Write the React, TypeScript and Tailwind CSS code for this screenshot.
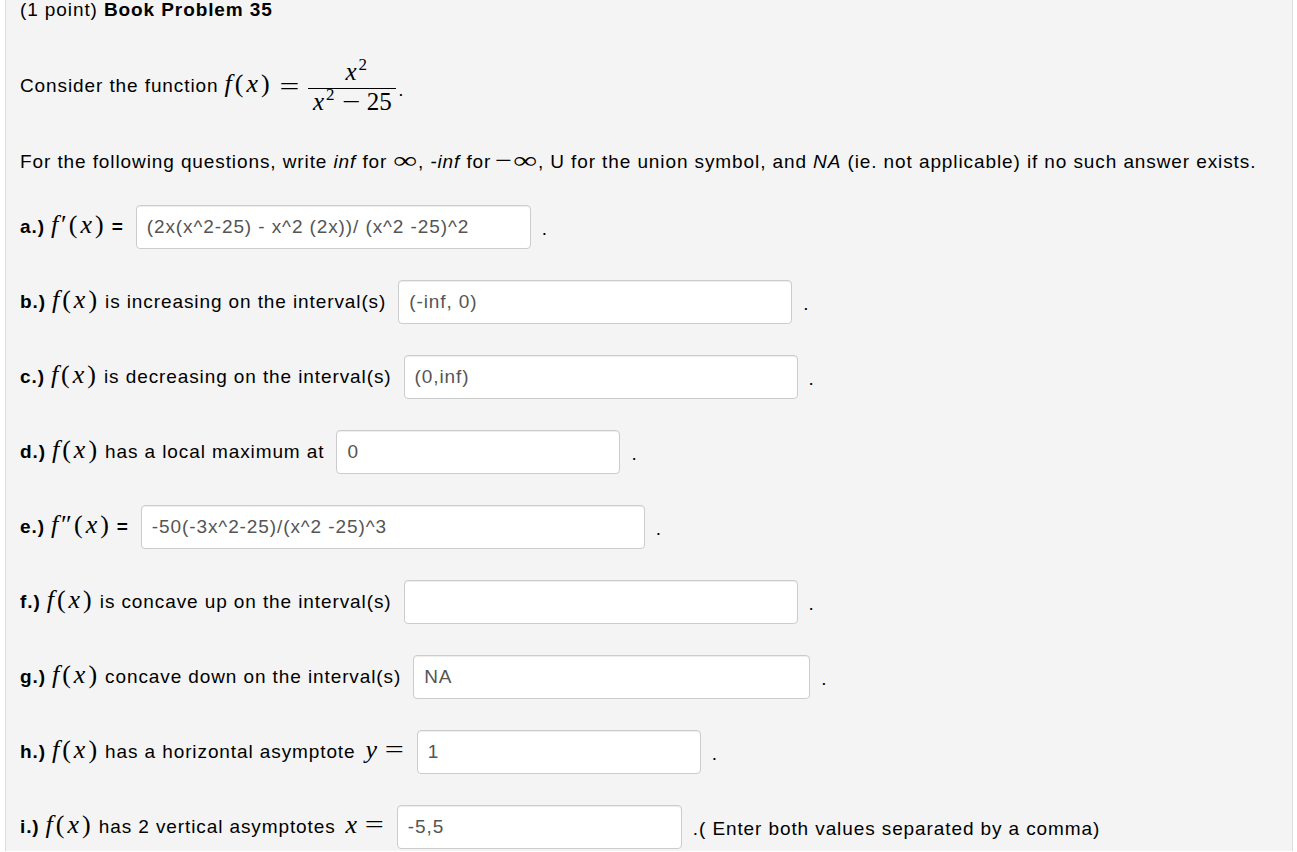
import React from 'react';

const serif = "font-['Liberation_Serif','Times_New_Roman',serif] tracking-normal";

const Fx = ({ prime = '' }: { prime?: string }) => (
  <span className={`${serif} text-[26px] leading-none whitespace-nowrap`}>
    <i className="mr-[3px] italic">f</i>
    {prime && <span className="mr-[2px]">{prime}</span>}
    <span>(</span>
    <i className="mx-[3px] italic">x</i>
    <span>)</span>
  </span>
);

const MathVar = ({ v }: { v: string }) => (
  <span className={`${serif} text-[26px] leading-none whitespace-nowrap mr-[3px]`}>
    <i className="ml-[2px] italic">{v}</i>
    <span className="ml-[10px] inline-block scale-x-[1.3]">=</span>
  </span>
);

const Inf = ({ minus = false }: { minus?: boolean }) => (
  <span className={`${serif} text-[23px] leading-none`}>
    {minus && <span className="mr-[3px] inline-block scale-x-[1.3]">−</span>}
    <span className="mx-[4px] inline-block scale-x-[1.45]">∞</span>
  </span>
);

const Sq = () => <span className="relative -top-[10px] ml-[2px] text-[17px]">2</span>;

const Box = ({ value, w }: { value: string; w: string }) => (
  <input
    readOnly
    value={value}
    className={`${w} h-[44px] rounded-[4px] border border-[#cccccc] bg-white px-[10px] text-[19px] tracking-[0.9px] text-[#555555] shadow-[inset_0_1px_1px_rgba(0,0,0,0.075)] outline-none font-['Liberation_Sans',Arial,sans-serif]`}
  />
);

interface Row {
  tag: string;
  label: React.ReactNode;
  value: string;
  w: string;
  after?: string;
}

const rows: Row[] = [
  { tag: 'a.)', label: <><Fx prime="′" /><b>=</b></>, value: '(2x(x^2-25) - x^2 (2x))/ (x^2 -25)^2', w: 'w-[395px]' },
  { tag: 'b.)', label: <><Fx /><span>is increasing on the interval(s)</span></>, value: '(-inf, 0)', w: 'w-[394px]' },
  { tag: 'c.)', label: <><Fx /><span>is decreasing on the interval(s)</span></>, value: '(0,inf)', w: 'w-[394px]' },
  { tag: 'd.)', label: <><Fx /><span>has a local maximum at</span></>, value: '0', w: 'w-[284px]' },
  { tag: 'e.)', label: <><Fx prime="″" /><b>=</b></>, value: '-50(-3x^2-25)/(x^2 -25)^3', w: 'w-[504px]' },
  { tag: 'f.)', label: <><Fx /><span>is concave up on the interval(s)</span></>, value: '', w: 'w-[394px]' },
  { tag: 'g.)', label: <><Fx /><span>concave down on the interval(s)</span></>, value: 'NA', w: 'w-[397px]' },
  { tag: 'h.)', label: <><Fx /><span>has a horizontal asymptote</span><MathVar v="y" /></>, value: '1', w: 'w-[284px]' },
  { tag: 'i.)', label: <><Fx /><span>has 2 vertical asymptotes</span><MathVar v="x" /></>, value: '-5,5', w: 'w-[285px]', after: '.( Enter both values separated by a comma)' },
];

export default function App() {
  return (
    <div className="min-h-[852px] bg-white font-['Liberation_Sans',Arial,sans-serif] text-[19px] tracking-[0.9px] text-black">
      <div className="ml-[5px] w-[1288px] min-h-[852px] border-x border-[#dddddd] bg-[#f4f4f4] px-[14px]">
        <div className="h-[22px] leading-[22px] -mt-[1px]">
          (1 point) <b>Book Problem 35</b>
        </div>

        <div className="mt-[37px] flex h-[56px] items-center">
          <span>Consider the function</span>
          <span className="ml-[6px]"><Fx /></span>
          <span className={`${serif} ml-[12px] inline-block scale-x-[1.35] text-[26px]`}>=</span>
          <span className={`${serif} ml-[12px] inline-flex flex-col items-center text-[25px] leading-[26px]`}>
            <span className="pt-[5px] pl-[8px]">
              <i className="italic">x</i>
              <Sq />
            </span>
            <span className="h-[1px] w-[88px] bg-black" />
            <span className="whitespace-nowrap">
              <i className="italic">x</i>
              <Sq />
              <span className="mx-[9px] inline-block scale-x-[1.3]">−</span>25
            </span>
          </span>
          <span className="ml-[2px] mt-[8px]">.</span>
        </div>

        <div className="mt-[35px] h-[22px] leading-[22px] whitespace-nowrap">
          For the following questions, write <i>inf</i> for <Inf />, <i>-inf</i> for <Inf minus />, U for the
          union symbol, and <i>NA</i> (ie. not applicable) if no such answer exists.
        </div>

        <div className="mt-[34px] flex flex-col gap-[31px]">
          {rows.map((r) => (
            <div key={r.tag} className="flex h-[44px] items-center whitespace-nowrap">
              <b className="mr-[6px]">{r.tag}</b>
              <span className="mr-[12px] flex items-baseline gap-[8px]">{r.label}</span>
              <Box value={r.value} w={r.w} />
              <span className="ml-[11px] mt-[4px]">{r.after ?? '.'}</span>
            </div>
          ))}
        </div>
      </div>
    </div>
  );
}
